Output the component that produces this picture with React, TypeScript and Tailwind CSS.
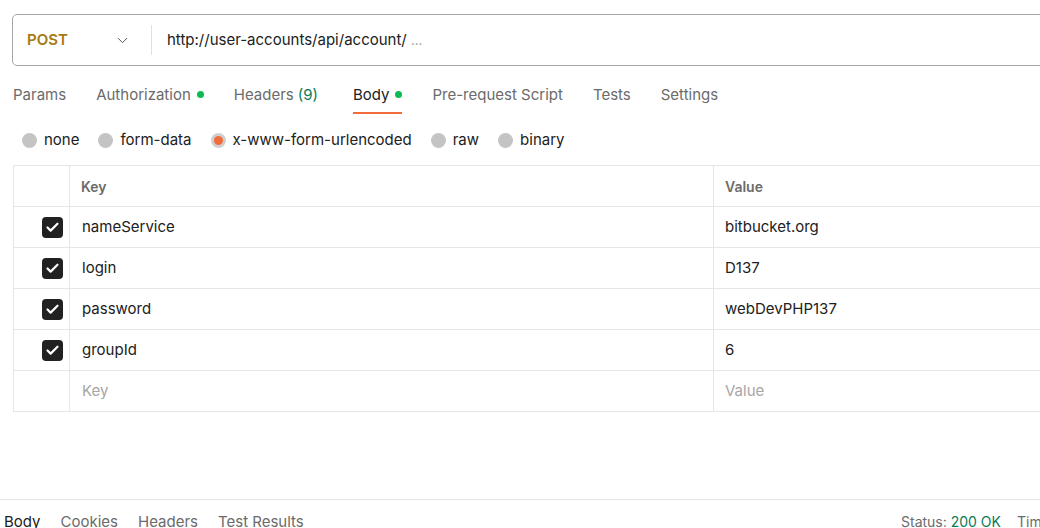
import { ChevronDown, Check } from 'lucide-react'

const tabs = [
  { label: 'Params' },
  { label: 'Authorization', dot: true },
  { label: 'Headers', count: '(9)' },
  { label: 'Body', dot: true, active: true },
  { label: 'Pre-request Script' },
  { label: 'Tests' },
  { label: 'Settings' },
]

const bodyTypes = [
  { label: 'none' },
  { label: 'form-data' },
  { label: 'x-www-form-urlencoded', selected: true },
  { label: 'raw' },
  { label: 'binary' },
]

const rows = [
  { key: 'nameService', value: 'bitbucket.org' },
  { key: 'login', value: 'D137' },
  { key: 'password', value: 'webDevPHP137' },
  { key: 'groupId', value: '6' },
]

export default function App() {
  return (
    <div
      className="w-[1040px] h-[528px] overflow-hidden bg-white relative text-[#212121]"
      style={{ fontFamily: 'Inter, "Noto Sans", sans-serif' }}
    >
      {/* URL bar */}
      <div className="pt-[14px] pl-[12px]">
        <div className="flex items-center h-[52px] w-[1040px] border border-[#a6a6a6] rounded-l-[5px]">
          <div className="flex items-center w-[138px] pl-[14px] pr-[20px] justify-between">
            <span className="text-[15px] font-semibold text-[#a67a12]">POST</span>
            <ChevronDown size={17} strokeWidth={1.4} className="text-[#555]" />
          </div>
          <div className="w-px h-[30px] bg-[#e0e0e0]" />
          <div className="pl-[15px] text-[15px] text-[#212121]">
            http://user-accounts/api/account/ <span className="text-[#a0a0a0] text-[13px]">...</span>
          </div>
        </div>
      </div>

      {/* Request tabs */}
      <div className="flex items-start h-[48px] pt-[12px] pl-[13px] gap-[30px] text-[15px] text-[#6b6b6b]">
        {tabs.map((t) => (
          <div
            key={t.label}
            className={`flex items-start pt-[6px] gap-[6px] h-[36px] border-b-2 ${t.active ? 'border-[#f26b3a] text-[#212121]' : 'border-transparent'} ${t.count ? 'mr-[5px]' : ''}`}
          >
            <span>{t.label}</span>
            {t.count && <span className="text-[#0a7b55] -ml-[2px]">{t.count}</span>}
            {t.dot && <span className="w-[7px] h-[7px] rounded-full bg-[#0cbb52] mt-[7px]" />}
          </div>
        ))}
      </div>

      {/* Body types */}
      <div className="flex items-center h-[52px] pl-[22px] gap-[19px] text-[15px] text-[#212121]">
        {bodyTypes.map((b) => (
          <div key={b.label} className="flex items-center gap-[7px]">
            {b.selected ? (
              <span className="w-[15px] h-[15px] rounded-full bg-[#cfcfcf] flex items-center justify-center">
                <span className="w-[9px] h-[9px] rounded-full bg-[#f26b3a]" />
              </span>
            ) : (
              <span className="w-[15px] h-[15px] rounded-full bg-[#c4c4c4]" />
            )}
            <span>{b.label}</span>
          </div>
        ))}
      </div>

      {/* Table */}
      <div className="ml-[13px] -mt-[1px] w-[1040px] border-l border-t border-[#e6e6e6] text-[15px]">
        <div className="flex h-[41px] border-b border-[#e6e6e6] text-[14px] font-semibold text-[#6b6b6b]">
          <div className="w-[56px] border-r border-[#e6e6e6]" />
          <div className="w-[644px] border-r border-[#e6e6e6] flex items-center pl-[11px]">Key</div>
          <div className="flex-1 flex items-center pl-[11px]">Value</div>
        </div>
        {rows.map((r) => (
          <div key={r.key} className="flex h-[41px] border-b border-[#e6e6e6]">
            <div className="w-[56px] border-r border-[#e6e6e6] flex items-center justify-end pr-[6px]">
              <span className="w-[21px] h-[21px] rounded-[4px] bg-[#212121] flex items-center justify-center">
                <Check size={15} strokeWidth={3.5} className="text-white" />
              </span>
            </div>
            <div className="w-[644px] border-r border-[#e6e6e6] flex items-center pl-[12px]">{r.key}</div>
            <div className="flex-1 flex items-center pl-[11px]">{r.value}</div>
          </div>
        ))}
        <div className="flex h-[41px] border-b border-[#e6e6e6] text-[#a6a6a6]">
          <div className="w-[56px] border-r border-[#e6e6e6]" />
          <div className="w-[644px] border-r border-[#e6e6e6] flex items-center pl-[12px]">Key</div>
          <div className="flex-1 flex items-center pl-[11px]">Value</div>
        </div>
      </div>

      {/* Response bar */}
      <div className="absolute left-0 w-[1040px] top-[499px] border-t border-[#e6e6e6] h-[40px] flex text-[15px] text-[#6b6b6b] whitespace-nowrap">
        <div className="flex gap-[20px] pl-[4px] pt-[11px] w-[901px] shrink-0">
          <span className="text-[#212121]">Body</span>
          <span>Cookies</span>
          <span>Headers</span>
          <span>Test Results</span>
        </div>
        <div className="flex gap-[16px] pt-[11px] text-[14px] shrink-0">
          <span>
            Status: <span className="text-[#0a7b55]">200 OK</span>
          </span>
          <span>Time</span>
        </div>
      </div>
    </div>
  )
}
